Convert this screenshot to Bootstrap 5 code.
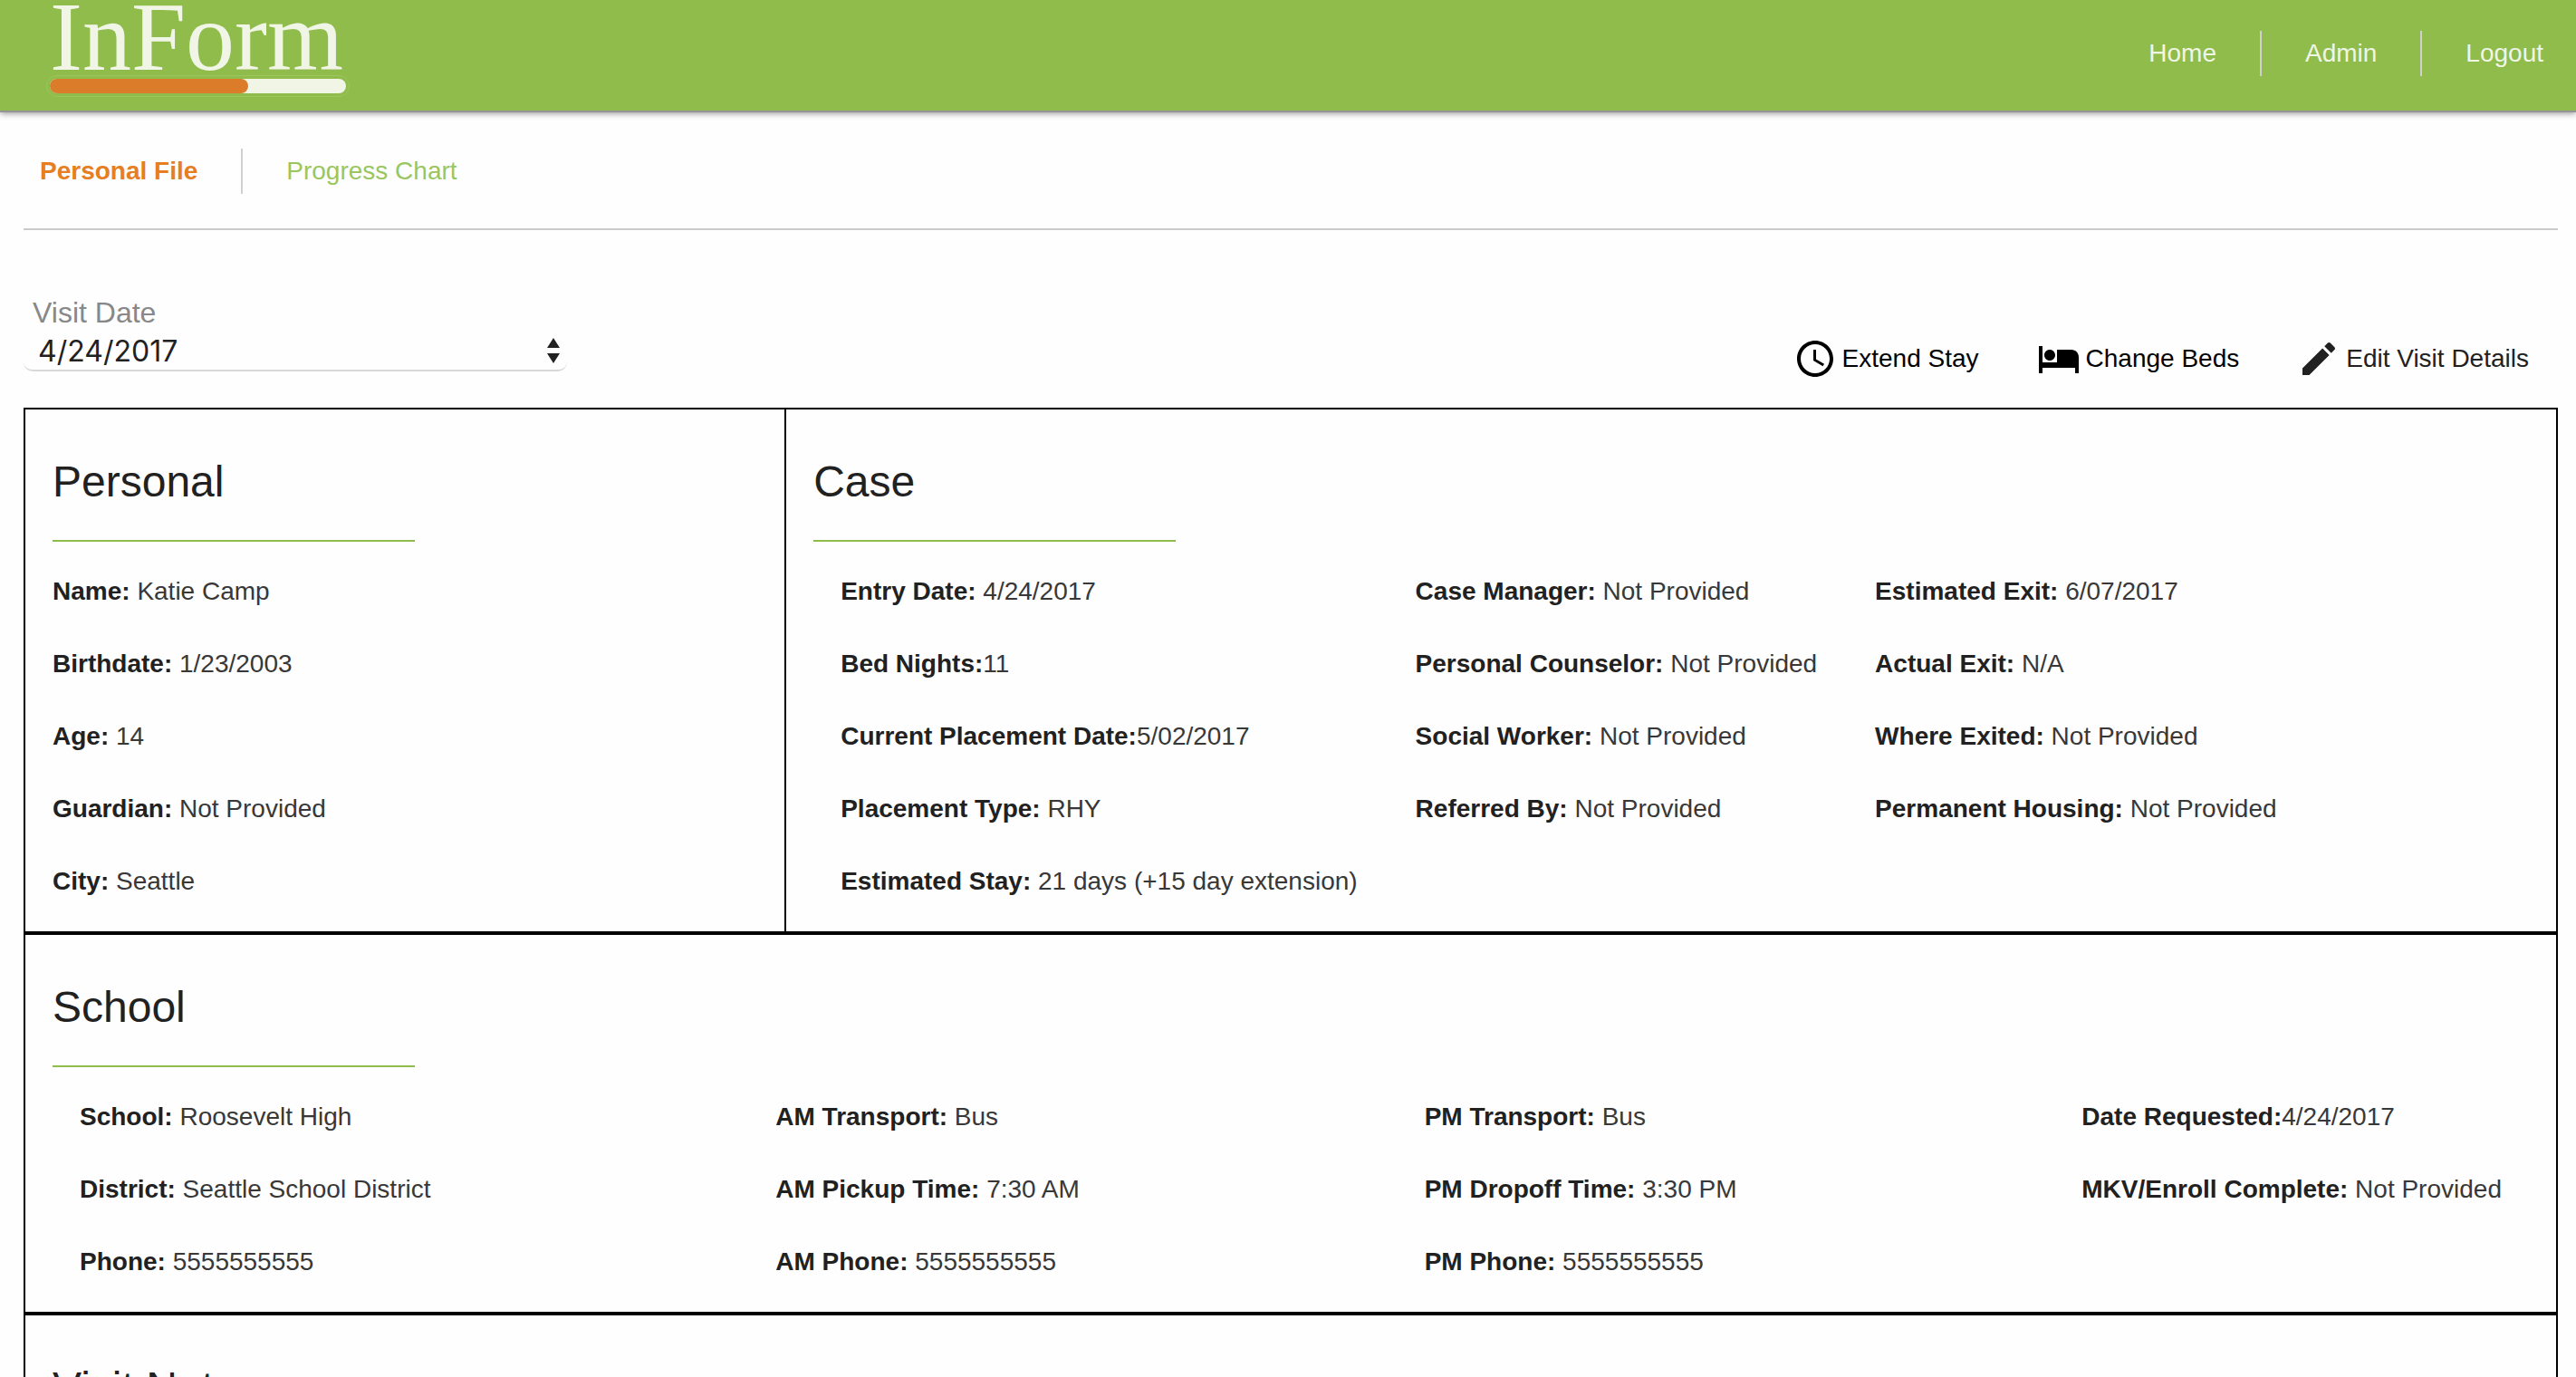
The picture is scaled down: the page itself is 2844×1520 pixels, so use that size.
<!DOCTYPE html>
<html lang="en">
<head>
<meta charset="utf-8">
<meta name="viewport" content="width=device-width, initial-scale=1">
<title>InForm - Personal File</title>
<link rel="stylesheet" href="https://cdn.jsdelivr.net/npm/bootstrap@5.3.0/dist/css/bootstrap.min.css">
<style>
  body { font-family: "Liberation Sans", Arial, sans-serif; font-size: 28px; line-height: 40px; color: #212121; background: #fefefe; }
  .app-bar { background: #8fbc4a; height: 122px; box-shadow: 0 2px 0 #949494, 0 3px 7px rgba(0,0,0,.45); }
  .brand { min-width: 327px; margin-left: 55px; color: #f0f5e6; }
  .brand:hover { color: #f0f5e6; }
  .brand-name { font-family: "Liberation Serif", "Times New Roman", serif; font-size: 108px; line-height: 82px; }
  .brand-bar { height: 16px; margin-top: 5px; border-radius: 8px; background: #f0f5e6; outline: 1px solid #9cc45f; outline-offset: 3px; }
  .brand-fill { width: 67%; height: 100%; border-radius: 8px; background: #db7c2a; }
  .main-links { padding: 34px 36px 0 0; }
  .split-links a { height: 50px; line-height: 50px; text-decoration: none; }
  .split-links li + li { margin-left: 48px; padding-left: 48px; border-left: 2px solid #d0d0d0; }
  .main-links a { color: #f0f5e6; }
  .page-body { padding: 0 20px 0 26px; }
  .tabs-row { padding: 42px 18px 38px; border-bottom: 2px solid #cacaca; }
  .tabs-row a { color: #9ac660; }
  .tabs-row a.active { color: #e67e22; font-weight: 700; }
  .visit-row { padding: 71px 32px 30px 0; }
  .visit-field { width: 600px; margin-bottom: 10px; }
  .visit-field label { padding-left: 10px; font-size: 32px; color: #888; }
  .visit-select { appearance: none; height: 45px; padding: 3px 48px 0 16px; border: 0; border-bottom: 2px solid #d9d9d9; border-radius: 10px; background: transparent; font-family: Inter, sans-serif; font-size: 32px; line-height: 40px; color: #212121; }
  .select-arrows { right: 8px; top: 8px; pointer-events: none; }
  .actions { gap: 64px; }
  .actions button { gap: 6px; padding: 0; border: 0; background: none; color: #000; line-height: 48px; }
  .actions button.edit-action { color: #212121; }
  .record { border: 2px solid #000; }
  .record-row { border-bottom: 4px solid #000; }
  .panel-personal { flex: 0 0 calc(30% + 2px); border-right: 2px solid #000; }
  .panel { padding: 51px 30px 35px; }
  .panel h2 { width: 400px; margin: 0 0 35px; padding-bottom: 35px; border-bottom: 2px solid #8fbc4a; font-size: 48px; line-height: 58px; font-weight: 400; }
  .facts { gap: 40px; white-space: nowrap; }
  .facts p { margin: 0; }
  .facts span { color: #383838; }
  .fact-columns { padding: 0 30px; }
  .case-columns { gap: 64px; }
</style>
<script src="https://cdn.jsdelivr.net/npm/bootstrap@5.3.0/dist/js/bootstrap.bundle.min.js"></script>
</head>
<body>
<header class="app-bar d-flex justify-content-between align-items-start">
  <a href="#" class="brand d-block text-decoration-none">
    <div class="brand-name">InForm</div>
    <div class="brand-bar"><div class="brand-fill"></div></div>
  </a>
  <nav aria-label="Main">
    <ul class="main-links split-links list-unstyled d-flex mb-0">
      <li><a class="d-block" href="#">Home</a></li>
      <li><a class="d-block" href="#">Admin</a></li>
      <li><a class="d-block" href="#">Logout</a></li>
    </ul>
  </nav>
</header>

<main class="page-body">
  <nav class="tabs-row" aria-label="Client">
    <ul class="split-links list-unstyled d-flex mb-0">
      <li><a class="d-block active" href="#" aria-current="page">Personal File</a></li>
      <li><a class="d-block" href="#">Progress Chart</a></li>
    </ul>
  </nav>

  <div class="visit-row d-flex justify-content-between align-items-end">
    <div class="visit-field">
      <label class="d-block" for="visit-date">Visit Date</label>
      <div class="position-relative d-flex">
        <select id="visit-date" class="visit-select w-100"><option>4/24/2017</option></select>
        <svg class="select-arrows position-absolute" width="14" height="28" viewBox="0 0 14 28" fill="#212121" aria-hidden="true"><path d="M7 0l7 11H0zM0 17h14L7 28z"/></svg>
      </div>
    </div>
    <div class="actions d-flex">
      <button type="button" class="d-flex align-items-center">
        <svg width="48" height="48" viewBox="0 0 24 24" fill="currentColor" aria-hidden="true"><path d="M11.99 2C6.47 2 2 6.48 2 12s4.47 10 9.99 10C17.52 22 22 17.52 22 12S17.52 2 11.99 2zM12 20c-4.42 0-8-3.58-8-8s3.58-8 8-8 8 3.58 8 8-3.58 8-8 8zm.5-13H11v6l5.25 3.15.75-1.23-4.5-2.67z"/></svg>
        Extend Stay
      </button>
      <button type="button" class="d-flex align-items-center">
        <svg width="48" height="48" viewBox="0 0 24 24" fill="currentColor" aria-hidden="true"><path d="M7 13c1.66 0 3-1.34 3-3S8.66 7 7 7s-3 1.34-3 3 1.34 3 3 3zm12-6h-8v7H3V5H1v15h2v-3h18v3h2v-9c0-2.21-1.79-4-4-4z"/></svg>
        Change Beds
      </button>
      <button type="button" class="edit-action d-flex align-items-center">
        <svg width="48" height="48" viewBox="0 0 24 24" fill="currentColor" aria-hidden="true"><path d="M3 17.25V21h3.75L17.81 9.94l-3.75-3.75L3 17.25zM20.71 7.04c.39-.39.39-1.02 0-1.41l-2.34-2.34c-.39-.39-1.02-.39-1.41 0l-1.83 1.83 3.75 3.75 1.83-1.83z"/></svg>
        Edit Visit Details
      </button>
    </div>
  </div>

  <div class="record">
    <div class="record-row d-flex">
      <section class="panel panel-personal">
        <h2>Personal</h2>
        <div class="facts d-flex flex-column">
          <p><strong>Name:</strong> <span>Katie Camp</span></p>
          <p><strong>Birthdate:</strong> <span>1/23/2003</span></p>
          <p><strong>Age:</strong> <span>14</span></p>
          <p><strong>Guardian:</strong> <span>Not Provided</span></p>
          <p><strong>City:</strong> <span>Seattle</span></p>
        </div>
      </section>
      <section class="panel flex-grow-1">
        <h2>Case</h2>
        <div class="fact-columns case-columns d-flex">
          <div class="facts d-flex flex-column">
            <p><strong>Entry Date:</strong> <span>4/24/2017</span></p>
            <p><strong>Bed Nights:</strong><span>11</span></p>
            <p><strong>Current Placement Date:</strong><span>5/02/2017</span></p>
            <p><strong>Placement Type:</strong> <span>RHY</span></p>
            <p><strong>Estimated Stay:</strong> <span>21 days (+15 day extension)</span></p>
          </div>
          <div class="facts d-flex flex-column">
            <p><strong>Case Manager:</strong> <span>Not Provided</span></p>
            <p><strong>Personal Counselor:</strong> <span>Not Provided</span></p>
            <p><strong>Social Worker:</strong> <span>Not Provided</span></p>
            <p><strong>Referred By:</strong> <span>Not Provided</span></p>
          </div>
          <div class="facts d-flex flex-column">
            <p><strong>Estimated Exit:</strong> <span>6/07/2017</span></p>
            <p><strong>Actual Exit:</strong> <span>N/A</span></p>
            <p><strong>Where Exited:</strong> <span>Not Provided</span></p>
            <p><strong>Permanent Housing:</strong> <span>Not Provided</span></p>
          </div>
        </div>
      </section>
    </div>
    <section class="record-row panel">
      <h2>School</h2>
      <div class="fact-columns d-flex justify-content-between">
        <div class="facts d-flex flex-column">
          <p><strong>School:</strong> <span>Roosevelt High</span></p>
          <p><strong>District:</strong> <span>Seattle School District</span></p>
          <p><strong>Phone:</strong> <span>5555555555</span></p>
        </div>
        <div class="facts d-flex flex-column">
          <p><strong>AM Transport:</strong> <span>Bus</span></p>
          <p><strong>AM Pickup Time:</strong> <span>7:30 AM</span></p>
          <p><strong>AM Phone:</strong> <span>5555555555</span></p>
        </div>
        <div class="facts d-flex flex-column">
          <p><strong>PM Transport:</strong> <span>Bus</span></p>
          <p><strong>PM Dropoff Time:</strong> <span>3:30 PM</span></p>
          <p><strong>PM Phone:</strong> <span>5555555555</span></p>
        </div>
        <div class="facts d-flex flex-column">
          <p><strong>Date Requested:</strong><span>4/24/2017</span></p>
          <p><strong>MKV/Enroll Complete:</strong> <span>Not Provided</span></p>
        </div>
      </div>
    </section>
    <section class="panel">
      <h2>Visit Notes</h2>
    </section>
  </div>
</main>
</body>
</html>
